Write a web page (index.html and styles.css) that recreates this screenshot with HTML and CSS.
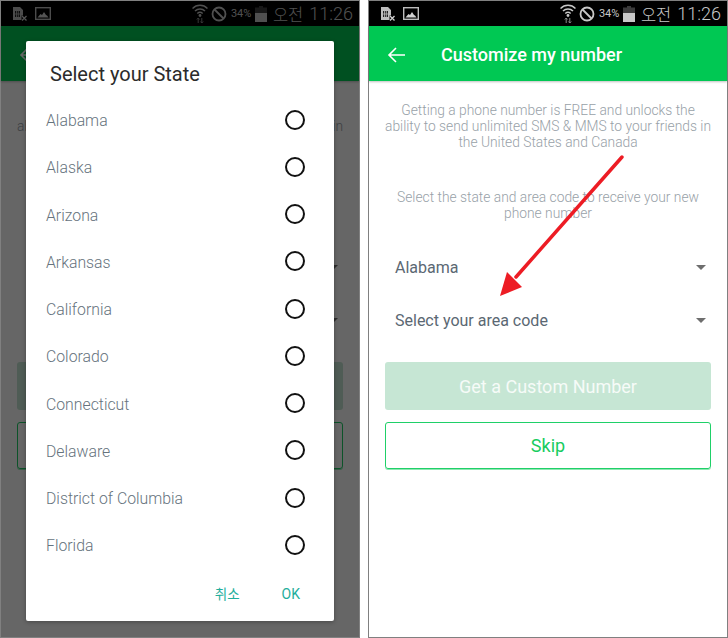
FILE: index.html
```html
<!DOCTYPE html>
<html>
<head>
	<meta charset="utf-8">
	<title>Customize my number</title>
	<link rel="stylesheet" href="styles.css">
</head>
<body>
	<svg class="defs" width="0" height="0">
		<symbol id="sim" viewBox="0 0 16 15">
			<path d="M1 1h7l3 3v5.500H9.500V14H1z" fill="#bdbdbd"/>
			<path d="M3 5h5v6H3z" fill="#222"/>
			<path d="M4.500 5v6M6.300 5v6M3 8h5" stroke="#bdbdbd" stroke-width=".8"/>
			<path d="M10 10l4.500 4.500M14.500 10L10 14.500" stroke="#d0d0d0" stroke-width="1.300"/>
		</symbol>
		<symbol id="image" viewBox="0 0 16 13">
			<rect x=".7" y=".7" width="14.600" height="11.600" fill="none" stroke="#bdbdbd" stroke-width="1.400"/>
			<path d="M2.500 10.500l3-3.500 1.500 1 2-3 2 3 1 .5 1.500 2z" fill="#d0d0d0"/>
		</symbol>
		<symbol id="wifi" viewBox="0 0 16 20">
			<g fill="none" stroke="#c8c8c8" stroke-width="1.500">
				<path d="M.5 4.500a10.500 10.500 0 0 1 15 0"/>
				<path d="M3 7a7.200 7.200 0 0 1 10 0"/>
				<path d="M5.300 9.500a4 4 0 0 1 5.400 0"/>
			</g>
			<circle cx="8" cy="11.500" r="1.400" fill="#c8c8c8"/>
			<path d="M6.200 14v5M4.800 15.500l1.400-1.500 1.400 1.500M9.800 19v-5M8.400 17.500l1.400 1.500 1.400-1.500" fill="none" stroke="#8a8a8a" stroke-width="1"/>
		</symbol>
		<symbol id="block" viewBox="0 0 16 16">
			<circle cx="8" cy="8" r="6.500" fill="none" stroke="#c8c8c8" stroke-width="1.800"/>
			<path d="M3.500 3.500l9 9" stroke="#c8c8c8" stroke-width="1.800"/>
		</symbol>
		<symbol id="battery" viewBox="0 0 12 16">
			<path d="M4 0h4v1.500h4V16H0V1.500h4z" fill="#3c3c3c"/>
			<path d="M0 7h12v9H0z" fill="#c8c8c8"/>
		</symbol>
	</svg>

	<div class="screens">
		<div class="phone">
			<div class="status">
				<svg class="ic-sim"><use href="#sim"/></svg>
				<svg class="ic-image"><use href="#image"/></svg>
				<span class="grow"></span>
				<svg class="ic-wifi"><use href="#wifi"/></svg>
				<svg class="ic-block"><use href="#block"/></svg>
				<span class="percent">34%</span>
				<svg class="ic-battery"><use href="#battery"/></svg>
				<span class="ampm">오전</span>
				<span class="clock">11:26</span>
			</div>
			<div class="appbar">
				<svg class="back" width="20" height="18" viewBox="0 0 20 18"><path d="M18 9H2M9 2L2 9l7 7" fill="none" stroke="#fff" stroke-width="1.600"/></svg>
				<span class="appbar-title">Customize my number</span>
			</div>
			<div class="content">
				<p class="intro">Getting a phone number is FREE and unlocks the ability to send unlimited SMS &amp; MMS to your friends in the United States and Canada</p>
				<p class="intro second">Select the state and area code to receive your new phone number</p>
				<div class="select first"><span>Alabama</span><i class="caret"></i></div>
				<div class="select"><span>Select your area code</span><i class="caret"></i></div>
				<div class="btn btn-disabled">Get a Custom Number</div>
				<div class="btn btn-outline">Skip</div>
			</div>

			<div class="overlay"></div>
			<div class="dialog">
				<div class="dialog-title">Select your State</div>
				<div class="state-list">
					<div class="state"><span>Alabama</span><i class="radio"></i></div>
					<div class="state"><span>Alaska</span><i class="radio"></i></div>
					<div class="state"><span>Arizona</span><i class="radio"></i></div>
					<div class="state"><span>Arkansas</span><i class="radio"></i></div>
					<div class="state"><span>California</span><i class="radio"></i></div>
					<div class="state"><span>Colorado</span><i class="radio"></i></div>
					<div class="state"><span>Connecticut</span><i class="radio"></i></div>
					<div class="state"><span>Delaware</span><i class="radio"></i></div>
					<div class="state"><span>District of Columbia</span><i class="radio"></i></div>
					<div class="state"><span>Florida</span><i class="radio"></i></div>
				</div>
				<div class="dialog-actions">
					<span class="action-cancel">취소</span>
					<span class="action-ok">OK</span>
				</div>
			</div>
		</div>

		<div class="phone">
			<div class="status">
				<svg class="ic-sim"><use href="#sim"/></svg>
				<svg class="ic-image"><use href="#image"/></svg>
				<span class="grow"></span>
				<svg class="ic-wifi"><use href="#wifi"/></svg>
				<svg class="ic-block"><use href="#block"/></svg>
				<span class="percent">34%</span>
				<svg class="ic-battery"><use href="#battery"/></svg>
				<span class="ampm">오전</span>
				<span class="clock">11:26</span>
			</div>
			<div class="appbar">
				<svg class="back" width="20" height="18" viewBox="0 0 20 18"><path d="M18 9H2M9 2L2 9l7 7" fill="none" stroke="#fff" stroke-width="1.600"/></svg>
				<span class="appbar-title">Customize my number</span>
			</div>
			<div class="content">
				<p class="intro">Getting a phone number is FREE and unlocks the ability to send unlimited SMS &amp; MMS to your friends in the United States and Canada</p>
				<p class="intro second">Select the state and area code to receive your new phone number</p>
				<div class="select first"><span>Alabama</span><i class="caret"></i></div>
				<div class="select"><span>Select your area code</span><i class="caret"></i></div>
				<div class="btn btn-disabled">Get a Custom Number</div>
				<div class="btn btn-outline">Skip</div>
			</div>
			<svg class="arrow" width="140" height="150" viewBox="0 0 140 150">
				<path d="M122 5L16 125" stroke="#ed1c24" stroke-width="3.500" stroke-linecap="round"/>
				<path d="M0 144L7 120L22 135z" fill="#ed1c24"/>
			</svg>
		</div>
	</div>
</body>
</html>
```

FILE: styles.css
```css
html, body{
	margin: 0;
	padding: 0;
	background: #fff;
}
body{
	font-family: Roboto, "Noto Sans CJK KR", sans-serif;
}
.defs{
	position: absolute;
}
.screens{
	display: flex;
	gap: 8px;
	width: 728px;
	height: 638px;
	overflow: hidden;
}
.phone{
	position: relative;
	width: 360px;
	height: 638px;
	box-sizing: border-box;
	border: 1px solid #808080;
	background: #fff;
	flex: none;
}

/* status bar */
.status{
	display: flex;
	align-items: center;
	height: 25px;
	padding: 0 6px 0 11px;
	background: #000;
	color: #c8c8c8;
}
.grow{
	flex: 1;
}
.ic-sim{
	width: 16px;
	height: 15px;
}
.ic-image{
	width: 16px;
	height: 13px;
	margin-left: 7px;
}
.ic-wifi{
	width: 16px;
	height: 20px;
}
.ic-block{
	width: 16px;
	height: 16px;
	margin-left: 3px;
}
.percent{
	font-size: 11px;
	margin-left: 4px;
	width: 22px;
}
.ic-battery{
	width: 12px;
	height: 16px;
	margin-left: 2px;
}
.ampm{
	font-size: 16.5px;
	font-weight: 300;
	margin-left: 6px;
}
.clock{
	font-size: 18px;
	font-weight: 300;
	margin-left: 6px;
}

/* green bar */
.appbar{
	display: flex;
	align-items: center;
	height: 53px;
	padding-top: 2px;
	background: #00c853;
	box-shadow: 0 1px 2px rgba(0,0,0,.25);
	color: #fff;
}
.back{
	margin-left: 18px;
}
.appbar-title{
	font-size: 18px;
	font-weight: 500;
	margin-left: 34px;
}

/* page */
.content{
	padding: 21px 16px 0;
}
.intro{
	margin: 0 -2px;
	font-size: 13.8px;
	font-weight: 300;
	line-height: 16.2px;
	text-align: center;
	color: #98a1a8;
}
.second{
	margin-top: 38px;
}
.select{
	display: flex;
	align-items: center;
	justify-content: space-between;
	height: 53px;
	padding: 0 5px 0 10px;
	font-size: 16px;
	color: #5b6873;
}
.first{
	margin-top: 20px;
}
.caret{
	width: 0;
	height: 0;
	border-left: 5px solid transparent;
	border-right: 5px solid transparent;
	border-top: 5px solid #6e6e6e;
}
.btn{
	display: flex;
	align-items: center;
	justify-content: center;
	box-sizing: border-box;
	height: 48px;
	border-radius: 3px;
	font-size: 18px;
}
.btn-disabled{
	margin-top: 15px;
	background: #c6e6d4;
	color: #f6fbf8;
}
.btn-outline{
	height: 47px;
	margin-top: 12px;
	border: 1px solid #1fd068;
	box-shadow: 0 1px 0 rgba(31,208,104,.5);
	color: #18cc60;
}

/* dialog over the first screen */
.overlay{
	position: absolute;
	inset: 0;
	background: rgba(0,0,0,.6);
}
.dialog{
	position: absolute;
	left: 25px;
	top: 40px;
	width: 308px;
	height: 580px;
	border-radius: 2px;
	background: #fff;
	box-shadow: 0 1px 4px rgba(0,0,0,.3);
}
.dialog-title{
	padding: 21px 0 0 24px;
	height: 34px;
	line-height: 24px;
	font-size: 20px;
	color: #2b2b2b;
}
.state{
	display: flex;
	align-items: center;
	justify-content: space-between;
	height: 47.25px;
	padding: 0 29px 0 20px;
	font-size: 15.8px;
	font-weight: 300;
	color: #66737d;
}
.state span{
	padding-top: 2px;
}
.radio{
	box-sizing: border-box;
	width: 20px;
	height: 20px;
	border: 2px solid #111;
	border-radius: 50%;
}
.dialog-actions{
	display: flex;
	justify-content: flex-end;
	align-items: center;
	gap: 42px;
	padding: 0 34px 0 0;
	margin-top: 1px;
	height: 48px;
	font-size: 14px;
	color: #1fae9c;
}
.action-cancel{
	font-size: 13.5px;
	padding-bottom: 2px;
}

/* red annotation */
.arrow{
	position: absolute;
	left: 131px;
	top: 151px;
}
```
